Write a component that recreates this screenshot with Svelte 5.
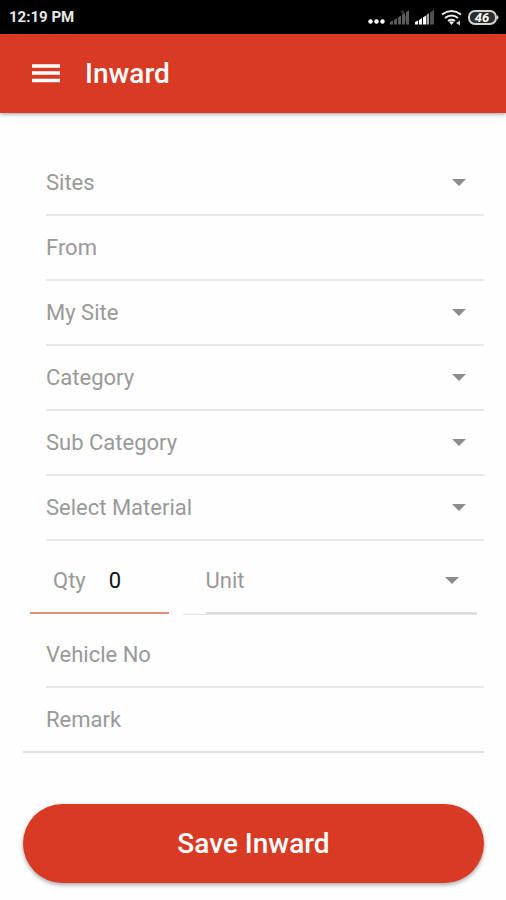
<script lang="ts">
  let fields = [
    { id: "sites", label: "Sites", type: "select" },
    { id: "from", label: "From", type: "text" },
    { id: "mySite", label: "My Site", type: "select" },
    { id: "category", label: "Category", type: "select" },
    { id: "subCategory", label: "Sub Category", type: "select" },
    { id: "material", label: "Select Material", type: "select" },
  ];
  let qty = "0";
</script>

<div class="page">
  <div class="status">
    <span class="time">12:19 PM</span>
    <svg class="status-icons" width="134" height="24" viewBox="0 0 134 24" aria-hidden="true">
      <g fill="#fff">
        <circle cx="4.500" cy="16.500" r="2.200" />
        <circle cx="10.500" cy="16.500" r="2.200" />
        <circle cx="16.500" cy="16.500" r="2.200" />
      </g>
      <g fill="#5c5c5c">
        <path d="M24 17l3-1.500v4h-3zM28 15l3-2v6.500h-3zM32 12.500l3-2v9h-3zM36 10l3-2v11.500h-3zM40 7.500l3-2.500v14.500h-3z" />
        <path d="M35 6l2-1 6 14-2 .5z" opacity="0.6" />
      </g>
      <path d="M49 17l3-1.500v4h-3zM53 15l3-2v6.500h-3zM57 12.500l3-2v9h-3z" fill="#fff" />
      <path d="M60.500 10l2.500-2v11.500h-2.500z" fill="#aaa" />
      <path d="M64 7.500l4-3v15h-4z" fill="#505050" />
      <g fill="none" stroke="#eee" stroke-width="2">
        <path d="M76 9.500q9.500-7 19 0" />
        <path d="M79 13q6.500-5 13 0" />
        <path d="M82 16q3.500-2.500 7 0" />
      </g>
      <path d="M83 17q2.500-1.500 5 0l-2.500 3z" fill="#eee" />
      <path d="M90 18l4-2.500v5z" fill="#ccc" />
      <rect x="103" y="6" width="27" height="13" rx="6" fill="#2c2c2c" stroke="#d4d4d4" stroke-width="2" />
      <path d="M131 10q3 2.500 0 5z" fill="#d4d4d4" />
      <text x="116" y="17" text-anchor="middle">46</text>
    </svg>
  </div>

  <header>
    <button class="menu" aria-label="Menu">
      <svg width="28" height="20" viewBox="0 0 28 20">
        <path d="M0 2h28M0 9h28M0 16.500h28" stroke="#fff" stroke-width="3.500" />
      </svg>
    </button>
    <h1>Inward</h1>
  </header>

  <form on:submit|preventDefault>
    {#each fields as field}
      <div class="item">
        <label for={field.id}>{field.label}</label>
        {#if field.type === "select"}
          <select id={field.id}></select>
          <span class="caret"></span>
        {:else}
          <input id={field.id} type="text" />
        {/if}
      </div>
    {/each}

    <div class="row">
      <div class="item qty">
        <label for="qty">Qty</label>
        <input id="qty" type="text" inputmode="numeric" bind:value={qty} />
      </div>
      <div class="unit">
        <div class="item">
          <label for="unit">Unit</label>
          <select id="unit"></select>
          <span class="caret"></span>
        </div>
      </div>
    </div>

    <div class="item">
      <label for="vehicle">Vehicle No</label>
      <input id="vehicle" type="text" />
    </div>
    <div class="item last">
      <label for="remark">Remark</label>
      <input id="remark" type="text" />
    </div>

    <button class="save" type="submit">Save Inward</button>
  </form>
</div>

<style>
  :global(body) {
    margin: 0;
    background: #fefefe;
  }
  .page {
    font-family: Roboto, "Liberation Sans", sans-serif;
    font-size: 22px;
    color: #999;
  }
  .status {
    display: flex;
    align-items: center;
    justify-content: space-between;
    height: 34px;
    padding: 0 6px 0 9px;
    background: #000;
  }
  .time {
    font-size: 15px;
    font-weight: 700;
    color: #e8e8e8;
  }
  .status-icons text {
    font-size: 13px;
    font-weight: 700;
    font-style: italic;
    fill: #fff;
  }
  header {
    display: flex;
    align-items: center;
    gap: 25px;
    height: 79px;
    padding: 0 32px;
    background: #d93a24;
    box-shadow: 0 1px 4px rgba(0, 0, 0, 0.4);
  }
  .menu {
    display: flex;
    padding: 0;
    border: 0;
    background: none;
  }
  h1 {
    margin: 0;
    font-size: 28px;
    font-weight: 500;
    color: #fff;
  }
  form {
    padding: 38px 22px 16px 23px;
  }
  .item {
    display: flex;
    align-items: center;
    box-sizing: border-box;
    height: 65px;
    margin-left: 23px;
    border-bottom: 2px solid #e9e7ea;
  }
  input,
  select {
    flex: 1;
    min-width: 0;
    height: 40px;
    padding: 0 0 0 23px;
    border: 0;
    outline: 0;
    background: none;
    appearance: none;
    font: inherit;
    color: #111;
  }
  .caret {
    margin-right: 18px;
    border: 7px solid transparent;
    border-top-color: #8c8c8c;
    border-bottom: 0;
  }
  .row {
    display: flex;
    gap: 14px;
    margin: 8px 7px;
  }
  .qty {
    flex: 0 0 31%;
    min-width: 0;
    margin-left: 0;
    padding-left: 23px;
    border-color: #dc8f72;
  }
  .unit {
    flex: 1;
    min-width: 0;
    border-bottom: 1px solid #e4e4e4;
  }
  .unit .item {
    border-color: #dedede;
  }
  .last {
    margin-left: 0;
    padding-left: 23px;
    border-color: #e0e0e0;
  }
  .save {
    width: 100%;
    height: 79px;
    margin-top: 51px;
    border: 0;
    border-radius: 40px;
    background: #d93a24;
    box-shadow: 0 2px 4px rgba(0, 0, 0, 0.35);
    font: inherit;
    font-size: 28px;
    font-weight: 500;
    color: #fff;
  }
</style>
